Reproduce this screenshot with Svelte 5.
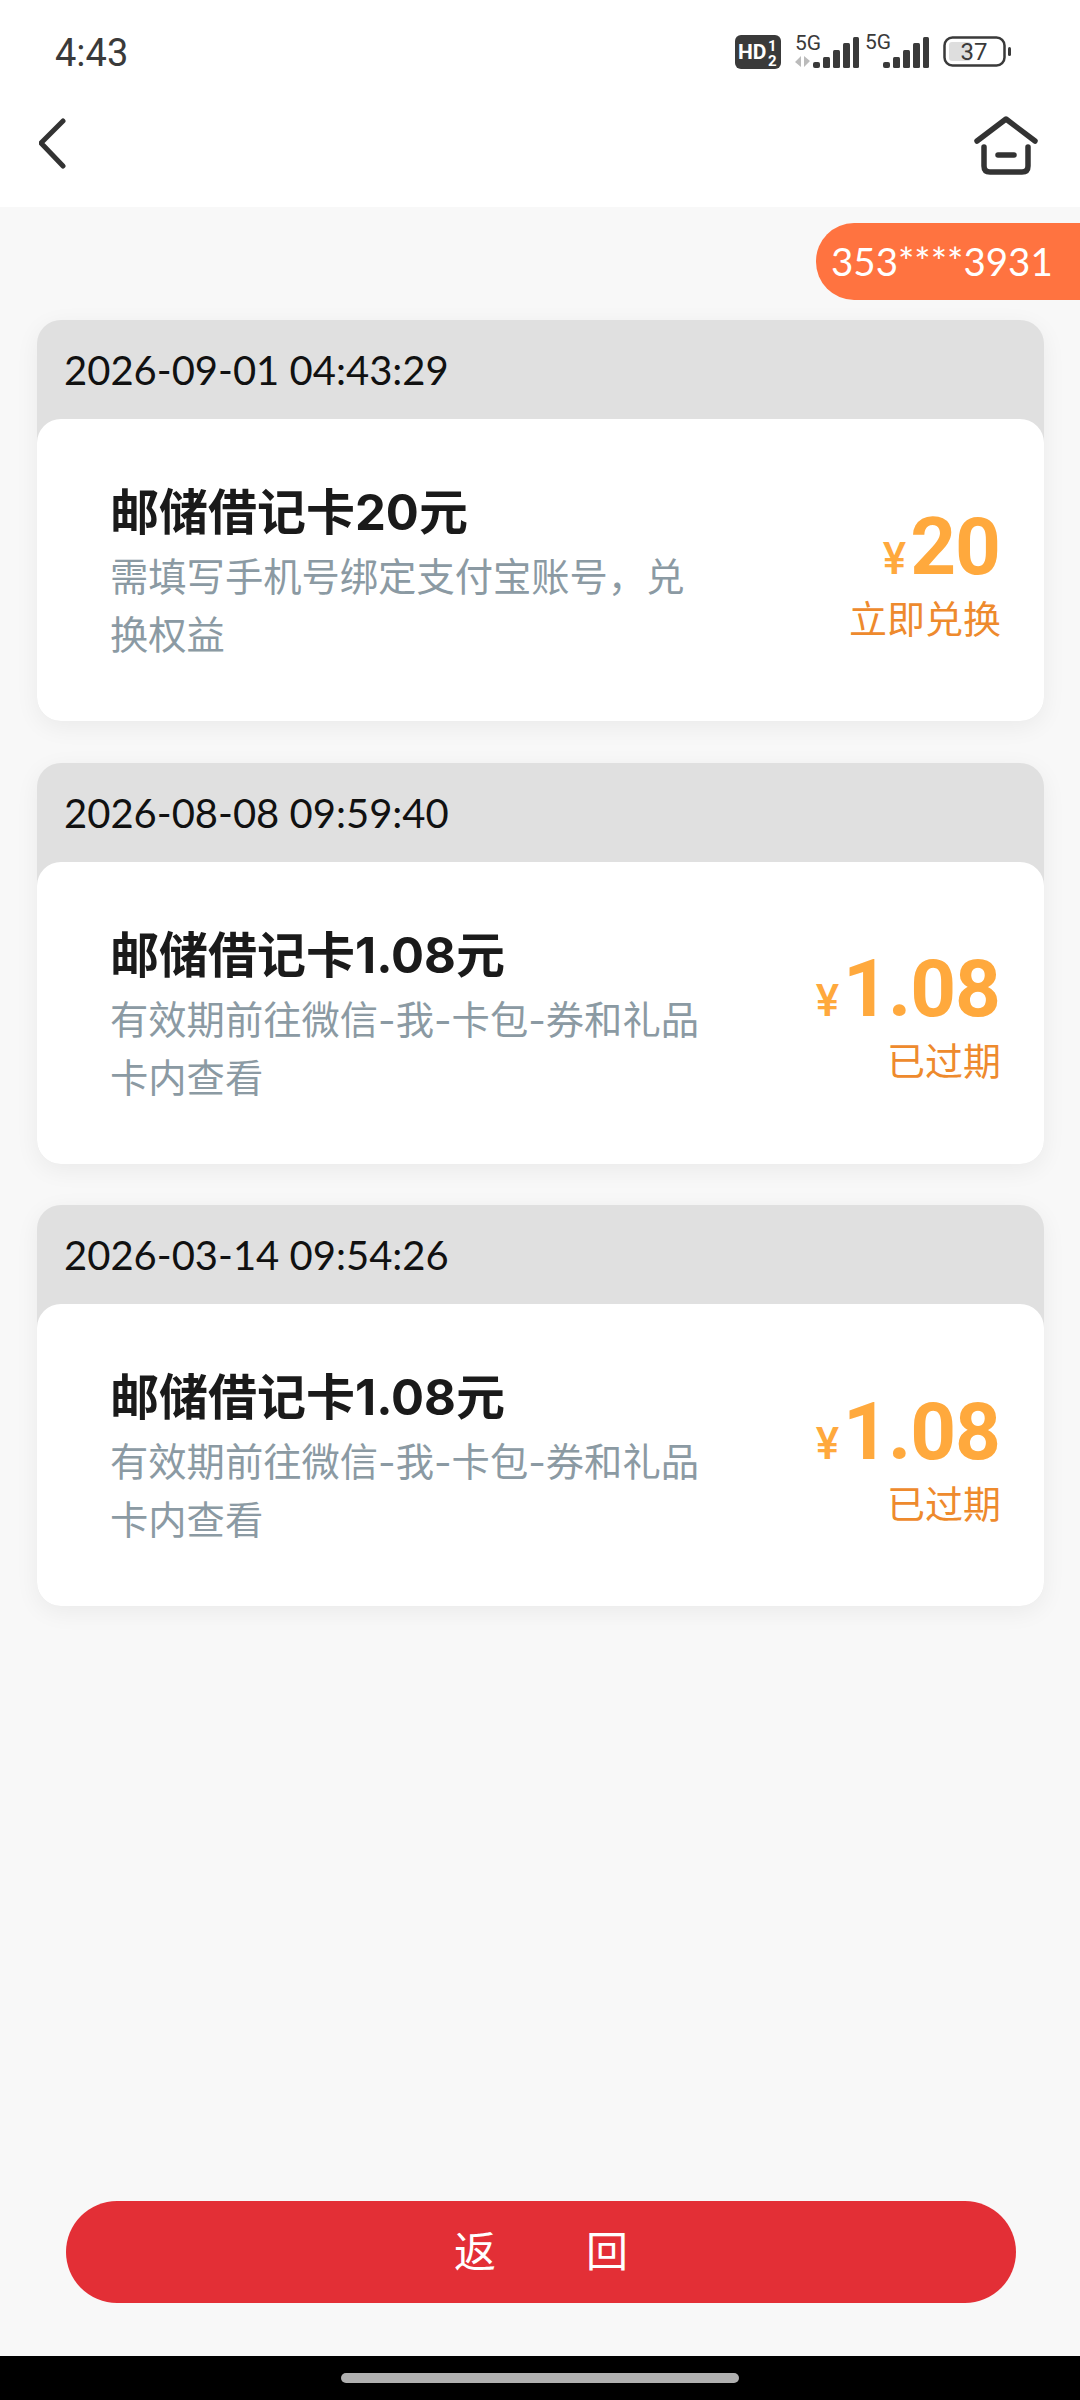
<script>
  const records = [
    { date: '2026-09-01 04:43:29', title: '邮储借记卡20元', desc: '需填写手机号绑定支付宝账号，兑换权益', price: '20', action: '立即兑换' },
    { date: '2026-08-08 09:59:40', title: '邮储借记卡1.08元', desc: '有效期前往微信-我-卡包-券和礼品卡内查看', price: '1.08', action: '已过期' },
    { date: '2026-03-14 09:54:26', title: '邮储借记卡1.08元', desc: '有效期前往微信-我-卡包-券和礼品卡内查看', price: '1.08', action: '已过期' }
  ];
</script>

<div class="page">
  <header class="top">
    <div class="status">
      <span class="time">4:43</span>
      <svg class="status-icons" width="280" height="40" viewBox="0 0 280 40">
        <rect x="3" y="5" width="46" height="34" rx="6" fill="#3a3a3a" />
        <text x="6" y="29" class="hd">HD</text>
        <text x="36" y="21" class="hd-n">1</text>
        <text x="36" y="36" class="hd-n">2</text>
        <text x="63" y="20" class="g5">5G</text>
        <path d="M69 26v11l-6-5zM72 26v11l6-6z" fill="#bbb" />
        <g fill="#3a3a3a">
          <rect x="81" y="32" width="7" height="6" rx="2" />
          <rect x="91" y="27" width="7" height="11" rx="1.500" />
          <rect x="101" y="20" width="7" height="18" rx="1.500" />
          <rect x="111" y="13" width="7" height="25" rx="1.500" />
          <rect x="121" y="7" width="6" height="31" rx="1.500" />
        </g>
        <text x="133" y="19" class="g5">5G</text>
        <g fill="#3a3a3a">
          <rect x="151" y="32" width="7" height="6" rx="2" />
          <rect x="161" y="27" width="7" height="11" rx="1.500" />
          <rect x="171" y="20" width="7" height="18" rx="1.500" />
          <rect x="181" y="13" width="7" height="25" rx="1.500" />
          <rect x="191" y="7" width="6" height="31" rx="1.500" />
        </g>
        <rect x="212.500" y="7.500" width="60" height="28" rx="8" fill="none" stroke="#3a3a3a" stroke-width="2.500" />
        <rect x="217" y="12" width="22" height="19" rx="3" fill="#dedede" />
        <text x="242" y="30" class="batt">37</text>
        <rect x="276" y="17" width="3" height="9" rx="1.500" fill="#3a3a3a" />
      </svg>
    </div>
    <nav class="nav">
      <svg width="50" height="70" viewBox="0 0 50 70">
        <path d="M24 12L2 34l22 23" fill="none" stroke="#333" stroke-width="5" stroke-linecap="round" stroke-linejoin="round" />
      </svg>
      <svg width="70" height="70" viewBox="0 0 70 70">
        <g fill="none" stroke="#333" stroke-width="5.500" stroke-linecap="round" stroke-linejoin="round">
          <path d="M5 32L34 10l29 22" />
          <path d="M12 38v19q0 6 6 6h32q6 0 6-6V38" />
          <path d="M26 46h16" />
        </g>
      </svg>
    </nav>
  </header>

  <div class="tag-row"><span class="tag">353****3931</span></div>

  <main class="list">
    {#each records as r}
      <section class="record">
        <div class="date">{r.date}</div>
        <div class="card">
          <div class="info">
            <div class="title">{r.title}</div>
            <div class="desc">{r.desc}</div>
          </div>
          <div class="side">
            <div class="price"><span class="yen">¥</span><span class="num">{r.price}</span></div>
            <div class="action">{r.action}</div>
          </div>
        </div>
      </section>
    {/each}
  </main>

  <div class="footer"><button class="back">返回</button></div>
  <div class="navbar"><span class="handle"></span></div>
</div>

<style>
  :global(body) { margin: 0; }
  .page {
    width: 1080px;
    height: 2400px;
    background: #f8f8f8;
    display: flex;
    flex-direction: column;
    font-family: Inter, "Noto Sans CJK SC", sans-serif;
    overflow: hidden;
  }
  .top { background: #fff; height: 207px; flex: none; }
  .status {
    height: 80px;
    box-sizing: border-box;
    padding: 30px 68px 0 55px;
    display: flex;
    justify-content: space-between;
    align-items: flex-start;
  }
  .time { font: 400 38px/46px Roboto, sans-serif; color: #3a3a3a; }
  .hd { font: 700 21px Roboto, sans-serif; fill: #fff; }
  .hd-n { font: 700 15px Roboto, sans-serif; fill: #fff; }
  .g5 { font: 400 21px Roboto, sans-serif; fill: #3a3a3a; }
  .batt { font: 400 24px Roboto, sans-serif; fill: #3a3a3a; text-anchor: middle; }
  .nav {
    height: 127px;
    display: flex;
    justify-content: space-between;
    align-items: center;
    padding: 0 38px 0 39px;
  }
  .tag-row { display: flex; justify-content: flex-end; padding-top: 16px; flex: none; }
  .tag {
    width: 264px;
    height: 77px;
    box-sizing: border-box;
    padding-left: 15px;
    background: #ff7340;
    color: #fff;
    border-radius: 38px 0 0 38px;
    font: 400 38.500px/77px Lato, sans-serif;
    white-space: nowrap;
  }
  .list {
    padding: 20px 36px 0 37px;
    display: flex;
    flex-direction: column;
    gap: 41.500px;
    flex: 1;
  }
  .record {
    background: #e0e0e0;
    border-radius: 24px;
    height: 401px;
    display: flex;
    flex-direction: column;
    box-shadow: 0 6px 24px rgba(0, 0, 0, 0.06);
  }
  .date {
    height: 99px;
    box-sizing: border-box;
    padding: 27px 0 0 27px;
    font: 400 40px/46px Lato, sans-serif;
    color: #111;
    flex: none;
  }
  .card {
    flex: 1;
    background: #fff;
    border-radius: 24px;
    display: flex;
    justify-content: space-between;
    align-items: center;
    padding: 0 43px 0 73px;
  }
  .info { width: 600px; padding-top: 5px; }
  .title { font-size: 49px; line-height: 64px; font-weight: 700; color: #1a1a1a; }
  .desc { font-size: 38.300px; line-height: 58px; color: #8b9aa3; margin-top: 3px; }
  .side { display: flex; flex-direction: column; align-items: flex-end; padding-top: 5px; }
  .price { display: flex; align-items: baseline; color: #ffa93d; font-family: Roboto, sans-serif; line-height: 90px; height: 90px; }
  .yen { font-size: 44px; font-weight: 500; margin-right: 4px; }
  .num { font-size: 80px; font-weight: 700; letter-spacing: -1px; margin-right: 1px; }
  .action { font-size: 38px; line-height: 50px; margin-top: 2px; color: #ee8a2d; }
  .footer { padding: 0 64px 53px 66px; flex: none; }
  .back {
    width: 950px;
    height: 102px;
    border: 0;
    border-radius: 51px;
    background: #e32f36;
    color: #fff;
    font: 400 42px "Noto Sans CJK SC", sans-serif;
    letter-spacing: 90px;
    padding: 0 0 8px 90px;
    display: block;
  }
  .navbar { height: 44px; box-sizing: border-box; background: #000; display: flex; justify-content: center; padding-top: 17px; flex: none; }
  .handle { width: 398px; height: 10px; border-radius: 5px; background: #b0b0b0; }
</style>
